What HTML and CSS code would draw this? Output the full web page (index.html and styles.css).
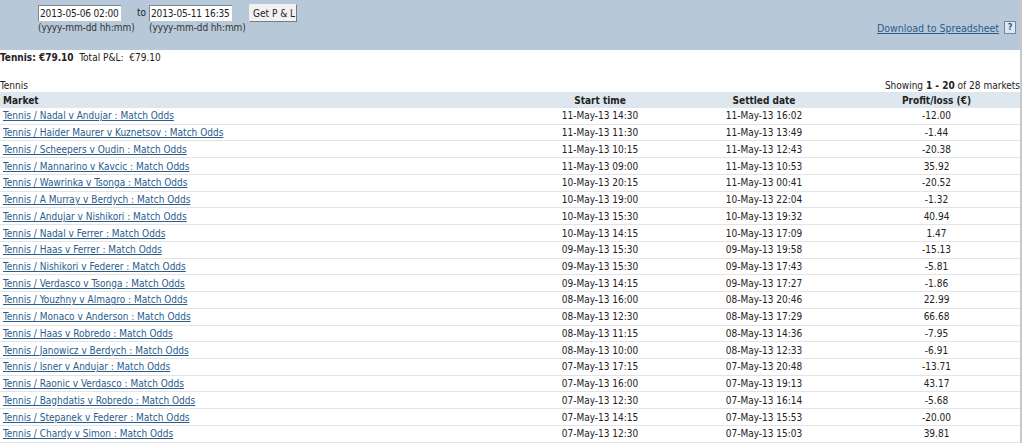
FILE: index.html
```html
<!DOCTYPE html>
<html lang="en">

<head>
    <meta charset="UTF-8">
    <title>Profit and Loss</title>
    <link rel="stylesheet" href="styles.css">
</head>

<body>
    <div class="page">
        <!-- Date range bar -->
        <div class="filter-bar">
            <div class="range">
                <div class="field">
                    <input type="text" class="date-input" value="2013-05-06 02:00">
                    <span class="hint">(yyyy-mm-dd hh:mm)</span>
                </div>
                <span class="to">to</span>
                <div class="field">
                    <input type="text" class="date-input" value="2013-05-11 16:35">
                    <span class="hint">(yyyy-mm-dd hh:mm)</span>
                </div>
                <button class="get-btn">Get P &amp; L</button>
            </div>
            <div class="download">
                <a href="#">Download to Spreadsheet</a>
                <span class="help">?</span>
            </div>
        </div>

        <div class="totals"><strong>Tennis: €79.10</strong>&nbsp; Total P&amp;L: &nbsp;€79.10</div>

        <div class="caption">
            <span>Tennis</span>
            <span>Showing <strong>1 - 20</strong> of 28 markets</span>
        </div>

        <table class="markets">
            <thead>
                <tr>
                    <th class="col-market">Market</th>
                    <th class="col-start">Start time</th>
                    <th class="col-settled">Settled date</th>
                    <th class="col-pl">Profit/loss (€)</th>
                </tr>
            </thead>
            <tbody id="rows"></tbody>
        </table>
    </div>

    <script>
        // Settled markets
        const markets = [
            ['Nadal v Andujar', '11-May-13 14:30', '11-May-13 16:02', '-12.00'],
            ['Haider Maurer v Kuznetsov', '11-May-13 11:30', '11-May-13 13:49', '-1.44'],
            ['Scheepers v Oudin', '11-May-13 10:15', '11-May-13 12:43', '-20.38'],
            ['Mannarino v Kavcic', '11-May-13 09:00', '11-May-13 10:53', '35.92'],
            ['Wawrinka v Tsonga', '10-May-13 20:15', '11-May-13 00:41', '-20.52'],
            ['A Murray v Berdych', '10-May-13 19:00', '10-May-13 22:04', '-1.32'],
            ['Andujar v Nishikori', '10-May-13 15:30', '10-May-13 19:32', '40.94'],
            ['Nadal v Ferrer', '10-May-13 14:15', '10-May-13 17:09', '1.47'],
            ['Haas v Ferrer', '09-May-13 15:30', '09-May-13 19:58', '-15.13'],
            ['Nishikori v Federer', '09-May-13 15:30', '09-May-13 17:43', '-5.81'],
            ['Verdasco v Tsonga', '09-May-13 14:15', '09-May-13 17:27', '-1.86'],
            ['Youzhny v Almagro', '08-May-13 16:00', '08-May-13 20:46', '22.99'],
            ['Monaco v Anderson', '08-May-13 12:30', '08-May-13 17:29', '66.68'],
            ['Haas v Robredo', '08-May-13 11:15', '08-May-13 14:36', '-7.95'],
            ['Janowicz v Berdych', '08-May-13 10:00', '08-May-13 12:33', '-6.91'],
            ['Isner v Andujar', '07-May-13 17:15', '07-May-13 20:48', '-13.71'],
            ['Raonic v Verdasco', '07-May-13 16:00', '07-May-13 19:13', '43.17'],
            ['Baghdatis v Robredo', '07-May-13 12:30', '07-May-13 16:14', '-5.68'],
            ['Stepanek v Federer', '07-May-13 14:15', '07-May-13 15:53', '-20.00'],
            ['Chardy v Simon', '07-May-13 12:30', '07-May-13 15:03', '39.81']
        ];

        let html = '';
        markets.forEach(function (m) {
            html += '<tr>' +
                '<td class="col-market"><a href="#">Tennis / ' + m[0] + ' : Match Odds</a></td>' +
                '<td class="col-start">' + m[1] + '</td>' +
                '<td class="col-settled">' + m[2] + '</td>' +
                '<td class="col-pl">' + m[3] + '</td>' +
                '</tr>';
        });
        document.getElementById('rows').innerHTML = html;
    </script>
</body>

</html>
```

FILE: styles.css
```css
body {
    margin: 0;
    font-family: "DejaVu Sans Condensed", "DejaVu Sans", sans-serif;
    font-size: 10px;
    color: #222;
    background-color: #fff;
}

.page {
    width: 1020px;
    min-height: 443px;
    border-right: 2px solid #c8c8c8;
}

.filter-bar {
    display: flex;
    justify-content: space-between;
    align-items: flex-start;
    height: 50px;
    background-color: #b7c9d8;
    padding-right: 4px;
}

.range {
    display: flex;
    align-items: flex-start;
    padding: 5px 0 0 38px;
}

.field {
    display: flex;
    flex-direction: column;
    width: 83px;
}

.date-input {
    width: 83px;
    height: 16px;
    box-sizing: border-box;
    margin: 0;
    padding: 0 1px;
    border: none;
    border-top: 1px solid #7a8a96;
    border-left: 1px solid #7a8a96;
    background-color: #fff;
    font-family: inherit;
    font-size: 10px;
    letter-spacing: -0.15px;
    color: #222;
}

.hint {
    margin-top: 1px;
    white-space: nowrap;
    font-size: 10px;
    letter-spacing: -0.1px;
    color: #333;
}

.to {
    margin: 2px 3px 0 16px;
    font-size: 10px;
}

.get-btn {
    margin: -1px 0 0 17px;
    width: 48px;
    height: 18px;
    padding: 0 0 0 2px;
    border: 1px solid #7b7b7b;
    border-top-color: #eee;
    border-left-color: #eee;
    background-color: #f2f2f2;
    font-family: inherit;
    font-size: 10px;
    white-space: nowrap;
    color: #222;
}

.download {
    display: flex;
    align-items: center;
    gap: 5px;
    margin-top: 21px;
}

.download a {
    color: #2a5c8c;
    font-size: 10.5px;
}

.help {
    display: inline-block;
    width: 10px;
    height: 11px;
    border: 1px solid #6d88a3;
    background-color: #dfe8ef;
    color: #2a5c8c;
    font-size: 9px;
    font-weight: bold;
    line-height: 11px;
    text-align: center;
}

.totals {
    margin-top: 1px;
    line-height: 14px;
}

.caption {
    display: flex;
    justify-content: space-between;
    margin-top: 15px;
    line-height: 12px;
}

.markets {
    width: 1020px;
    border-collapse: collapse;
    table-layout: fixed;
}

.markets th {
    height: 16px;
    padding: 0 3px;
    background-color: #dde7ed;
    font-weight: bold;
    text-align: center;
}

.markets th.col-market {
    text-align: left;
}

.markets td {
    height: 15.74px;
    padding: 0 3px;
    border-bottom: 1px solid #e4e4e4;
    text-align: center;
}

.markets td.col-market {
    text-align: left;
}

.markets a {
    color: #2a5c8c;
}

.col-market {
    width: 519px;
}

.col-start {
    width: 144px;
}

.col-settled {
    width: 172px;
}
```
